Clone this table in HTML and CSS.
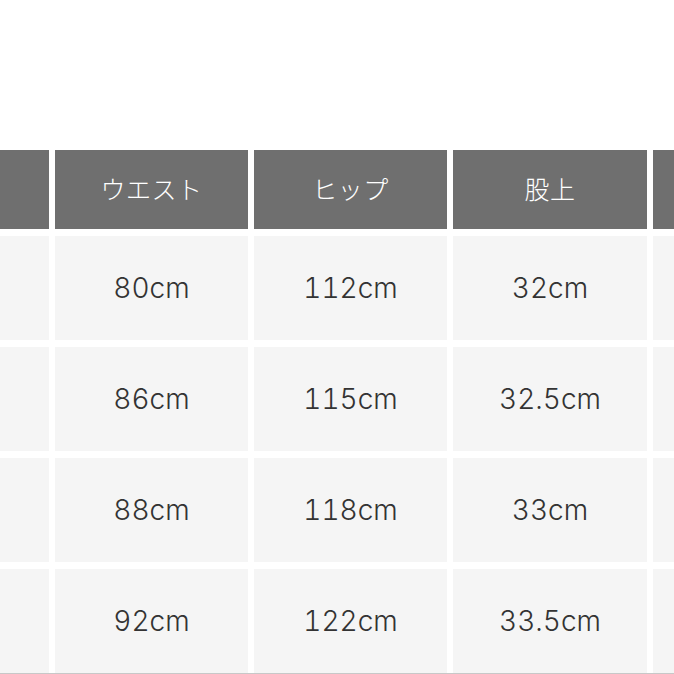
FILE: index.html
```html
<!DOCTYPE html>
<html lang="ja">
<head>
<meta charset="utf-8">
<link rel="stylesheet" href="styles.css">
</head>
<body>
<div class="table">
  <div class="cell head"></div>
  <div class="cell head">ウエスト</div>
  <div class="cell head">ヒップ</div>
  <div class="cell head">股上</div>
  <div class="cell head"></div>

  <div class="cell"></div>
  <div class="cell">80cm</div>
  <div class="cell">112cm</div>
  <div class="cell">32cm</div>
  <div class="cell"></div>

  <div class="cell"></div>
  <div class="cell">86cm</div>
  <div class="cell">115cm</div>
  <div class="cell">32.5cm</div>
  <div class="cell"></div>

  <div class="cell"></div>
  <div class="cell">88cm</div>
  <div class="cell">118cm</div>
  <div class="cell">33cm</div>
  <div class="cell"></div>

  <div class="cell"></div>
  <div class="cell">92cm</div>
  <div class="cell">122cm</div>
  <div class="cell">33.5cm</div>
  <div class="cell"></div>
</div>
<div class="rule"></div>
</body>
</html>
```
FILE: styles.css
```css
html, body {
  margin: 0;
  padding: 0;
  background: #ffffff;
}
body {
  padding-top: 150px;
  width: 674px;
  overflow: hidden;
}
.table {
  display: grid;
  grid-template-columns: 49px 193px 193px 194px 40px;
  grid-template-rows: 79px repeat(4, 104px);
  column-gap: 6px;
  row-gap: 7px;
}
.cell {
  background: #f5f5f5;
  display: flex;
  align-items: center;
  justify-content: center;
  font-family: "Inter", "Liberation Sans", Arial, "Noto Sans CJK JP", sans-serif;
  font-size: 28px;
  font-weight: 300;
  font-variant-numeric: tabular-nums;
  color: #333333;
}
.head {
  background: #6f6f6f;
  color: #ffffff;
  font-family: "Noto Sans CJK JP", sans-serif;
  font-size: 25px;
  font-weight: 300;
  letter-spacing: 0.5px;
  padding-bottom: 3px;
  box-sizing: border-box;
}
.rule {
  height: 1px;
  background: #c8c8c8;
}
```
